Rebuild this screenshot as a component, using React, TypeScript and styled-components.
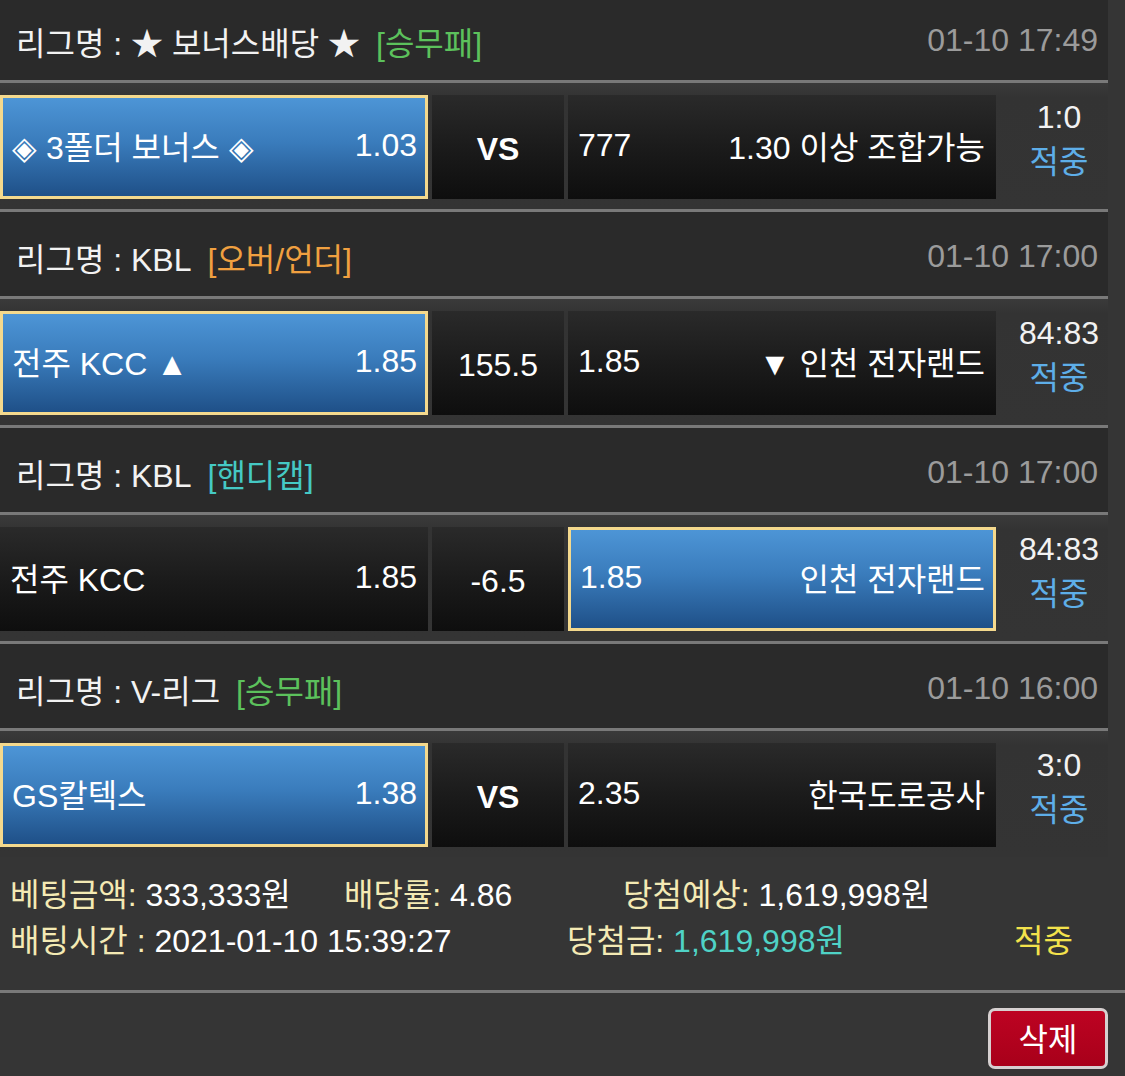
import React from "react";
import styled, { createGlobalStyle } from "styled-components";

const GlobalStyle = createGlobalStyle`
  body {
    margin: 0;
    background: #353535;
    font-family: "Liberation Sans", "Noto Sans CJK KR", sans-serif;
    color: #f2f2f2;
  }
`;

const Page = styled.div`
  width: 1125px;
  margin-top: -4px;
`;

const List = styled.div`
  width: 1108px;
`;

const Header = styled.div`
  box-sizing: border-box;
  height: 87px;
  padding: 5px 10px 0 16px;
  display: flex;
  align-items: center;
  justify-content: space-between;
  background: #2a2a2a;
  border-bottom: 3px solid #797979;
  font-size: 32px;
`;

const League = styled.div`
  display: flex;
  align-items: center;
  white-space: pre;
`;

const Tag = styled.span<{ $color: string }>`
  margin-left: 16px;
  color: ${({ $color }) => $color};
`;

const Time = styled.span`
  color: #9b9b9b;
`;

const MatchRow = styled.div<{ $last?: boolean }>`
  box-sizing: border-box;
  height: ${({ $last }) => ($last ? "126px" : "129px")};
  padding: 12px 0 10px;
  display: flex;
  gap: 4px;
  background: linear-gradient(#3a3a3a 0, #333333 14px, #343434 100%);
  border-bottom: ${({ $last }) => ($last ? "none" : "3px solid #797979")};
`;

const Pick = styled.div<{ $selected?: boolean }>`
  box-sizing: border-box;
  width: 428px;
  flex: none;
  display: flex;
  align-items: center;
  justify-content: space-between;
  font-size: 32px;
  color: #ffffff;
  white-space: pre;
  padding: ${({ $selected }) => ($selected ? "0 8px 4px 9px" : "0 11px 4px 10px")};
  border: ${({ $selected }) => ($selected ? "3px solid #f4d98d" : "none")};
  background: ${({ $selected }) =>
    $selected
      ? "linear-gradient(#4d95d6 0%, #3a7cbc 45%, #1f5088 100%)"
      : "linear-gradient(#2a2a2a 0%, #1b1b1b 50%, #0e0e0e 100%)"};
`;

const Middle = styled.div<{ $bold?: boolean }>`
  width: 132px;
  flex: none;
  display: flex;
  align-items: center;
  justify-content: center;
  padding-top: 4px;
  box-sizing: border-box;
  font-size: 32px;
  font-weight: ${({ $bold }) => ($bold ? 700 : 400)};
  color: #ffffff;
  background: linear-gradient(#2a2a2a 0%, #1b1b1b 50%, #0e0e0e 100%);
`;

const Score = styled.div`
  flex: 1;
  display: flex;
  flex-direction: column;
  align-items: center;
  padding-left: 10px;
  font-size: 32px;
  line-height: 45px;
`;

const Result = styled.span<{ $color: string }>`
  color: ${({ $color }) => $color};
`;

const Summary = styled.div`
  padding: 12px 0 29px 10px;
  font-size: 32px;
`;

const SummaryLine = styled.div`
  display: flex;
  height: 46px;
  align-items: center;
  white-space: pre;
`;

const Item = styled.div<{ $width?: number }>`
  width: ${({ $width }) => ($width ? `${$width}px` : "auto")};
  flex: none;
`;

const Label = styled.span`
  color: #f4eab4;
`;

const Value = styled.span<{ $color?: string }>`
  color: ${({ $color }) => $color || "#ffffff"};
`;

const Footer = styled.div`
  border-top: 3px solid #797979;
  padding: 15px 17px 0 0;
  display: flex;
  justify-content: flex-end;
`;

const DeleteButton = styled.button`
  box-sizing: border-box;
  width: 120px;
  height: 61px;
  border: 3px solid #d6d0d0;
  border-radius: 7px;
  background: linear-gradient(#bd0322, #a8001a);
  color: #ffffff;
  font-family: inherit;
  font-size: 32px;
  padding: 0 0 3px;
`;

type Match = {
  league: string;
  tag: string;
  tagColor: string;
  time: string;
  home: string;
  homeOdds: string;
  middle: string;
  bold?: boolean;
  awayOdds: string;
  away: string;
  pick: "home" | "away";
  score: string;
};

const matches: Match[] = [
  {
    league: "리그명 : ★ 보너스배당 ★",
    tag: "[승무패]",
    tagColor: "#5cc15c",
    time: "01-10 17:49",
    home: "◈ 3폴더 보너스 ◈",
    homeOdds: "1.03",
    middle: "VS",
    bold: true,
    awayOdds: "777",
    away: "1.30 이상 조합가능",
    pick: "home",
    score: "1:0",
  },
  {
    league: "리그명 : KBL",
    tag: "[오버/언더]",
    tagColor: "#f0a040",
    time: "01-10 17:00",
    home: "전주 KCC ▲",
    homeOdds: "1.85",
    middle: "155.5",
    awayOdds: "1.85",
    away: "▼ 인천 전자랜드",
    pick: "home",
    score: "84:83",
  },
  {
    league: "리그명 : KBL",
    tag: "[핸디캡]",
    tagColor: "#45c9c4",
    time: "01-10 17:00",
    home: "전주 KCC",
    homeOdds: "1.85",
    middle: "-6.5",
    awayOdds: "1.85",
    away: "인천 전자랜드",
    pick: "away",
    score: "84:83",
  },
  {
    league: "리그명 : V-리그",
    tag: "[승무패]",
    tagColor: "#5cc15c",
    time: "01-10 16:00",
    home: "GS칼텍스",
    homeOdds: "1.38",
    middle: "VS",
    bold: true,
    awayOdds: "2.35",
    away: "한국도로공사",
    pick: "home",
    score: "3:0",
  },
];

const App: React.FC = () => {
  return (
    <Page>
      <GlobalStyle />
      <List>
        {matches.map((m, i) => (
          <React.Fragment key={i}>
            <Header>
              <League>
                {m.league}
                <Tag $color={m.tagColor}>{m.tag}</Tag>
              </League>
              <Time>{m.time}</Time>
            </Header>
            <MatchRow $last={i === matches.length - 1}>
              <Pick $selected={m.pick === "home"}>
                <span>{m.home}</span>
                <span>{m.homeOdds}</span>
              </Pick>
              <Middle $bold={m.bold}>{m.middle}</Middle>
              <Pick $selected={m.pick === "away"}>
                <span>{m.awayOdds}</span>
                <span>{m.away}</span>
              </Pick>
              <Score>
                <span>{m.score}</span>
                <Result $color="#5eaee8">적중</Result>
              </Score>
            </MatchRow>
          </React.Fragment>
        ))}
      </List>
      <Summary>
        <SummaryLine>
          <Item $width={334}>
            <Label>베팅금액:</Label>
            <Value> 333,333원</Value>
          </Item>
          <Item $width={279}>
            <Label>배당률:</Label>
            <Value> 4.86</Value>
          </Item>
          <Item>
            <Label>당첨예상:</Label>
            <Value> 1,619,998원</Value>
          </Item>
        </SummaryLine>
        <SummaryLine>
          <Item $width={557}>
            <Label>배팅시간 :</Label>
            <Value> 2021-01-10 15:39:27</Value>
          </Item>
          <Item $width={447}>
            <Label>당첨금:</Label>
            <Value $color="#4fd2c6"> 1,619,998원</Value>
          </Item>
          <Item>
            <Value $color="#f3e24c">적중</Value>
          </Item>
        </SummaryLine>
      </Summary>
      <Footer>
        <DeleteButton>삭제</DeleteButton>
      </Footer>
    </Page>
  );
};

export default App;
